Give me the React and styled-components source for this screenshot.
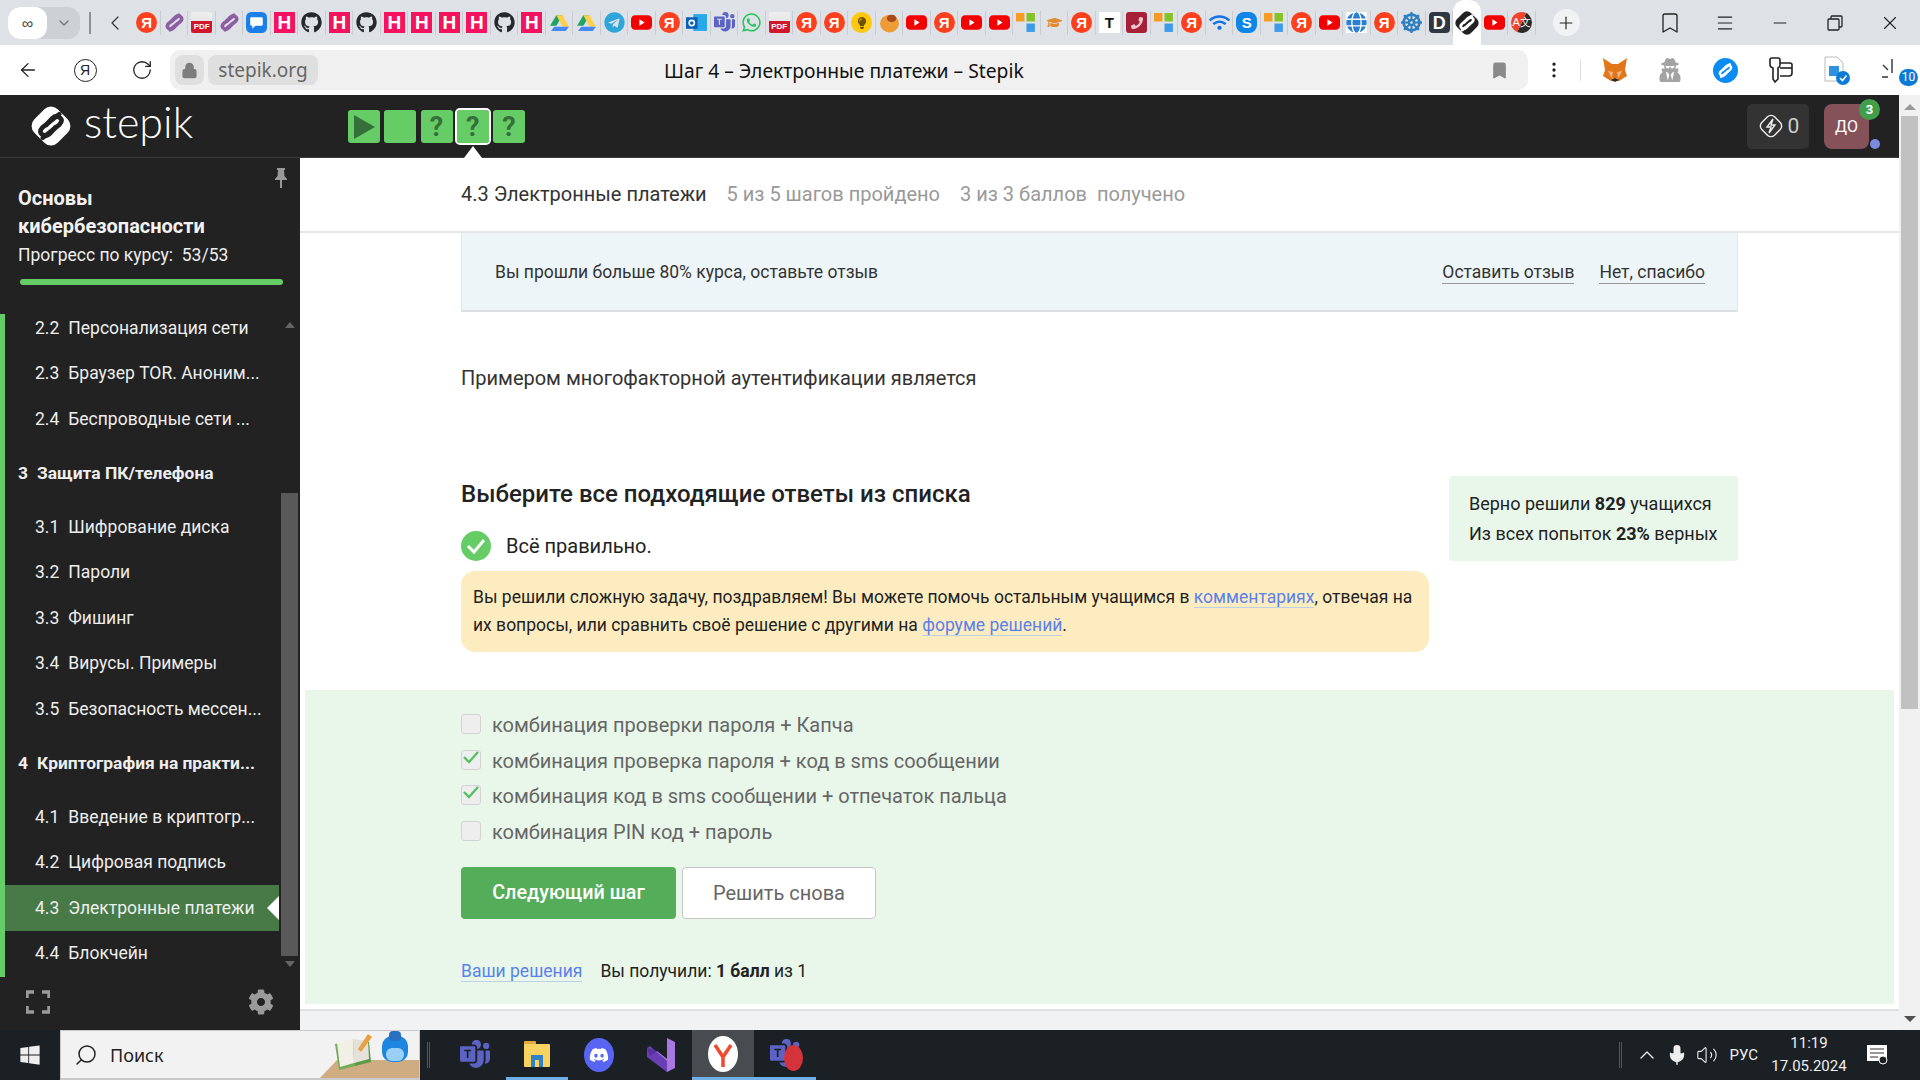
import styled, { createGlobalStyle } from "styled-components";
import { ArrowLeft, RotateCw, Lock, Bookmark, Plus, Menu, Minus, X, Search, ChevronUp, Volume2, Mic, ChevronDown, ChevronLeft, EllipsisVertical } from "lucide-react";
import {
  FaWindows,
  FaGithub,
  FaTelegram,
  FaWhatsapp,
  FaDiscord,
  FaWifi,
  FaCog,
  FaDharmachakra,
  FaGraduationCap,
  FaPhone,
  FaUserSecret,
  FaGlobe,
  FaLightbulb,
} from "react-icons/fa";
import { BsMicrosoftTeams } from "react-icons/bs";

const GlobalStyle = createGlobalStyle`
  html, body {
    margin: 0;
    padding: 0;
    overflow: hidden;
    background: #fff;
  }
  * { box-sizing: border-box; }
`;

const Page = styled.div`
  width: 1920px;
  height: 1080px;
  display: flex;
  flex-direction: column;
  overflow: hidden;
  font-family: Roboto, "Liberation Sans", sans-serif;
`;

/* browser chrome */
const TabBar = styled.div`
  height: 45px;
  flex: none;
  display: flex;
  align-items: center;
  background: #dee1e6;
`;

const TabGroup = styled.div`
  width: 72px;
  height: 32px;
  margin-left: 8px;
  display: flex;
  flex: none;
  border-radius: 12px;
  overflow: hidden;
  background: #cdd0d5;
`;

const GroupHome = styled.div`
  width: 39px;
  display: flex;
  align-items: center;
  justify-content: center;
  background: #fff;
  border-radius: 12px;
  font: 16px "Noto Sans", sans-serif;
  color: #444;
`;

const GroupArrow = styled.div`
  flex: 1;
  display: flex;
  align-items: center;
  justify-content: center;
  color: #777;
`;

const TabDivider = styled.div`
  width: 2px;
  height: 22px;
  flex: none;
  margin: 0 12px 0 9px;
  background: #8d9096;
`;

const BackTab = styled.div`
  width: 24px;
  flex: none;
  display: flex;
  justify-content: center;
  color: #333;
  margin-right: 6px;
`;

const Slots = styled.div`
  display: flex;
  height: 45px;
  flex: none;
`;

const Slot = styled.div`
  width: 27.5px;
  height: 45px;
  flex: none;
  position: relative;
  display: flex;
  align-items: center;
  justify-content: center;
  background: ${(p) => (p.$active ? "#fff" : "transparent")};
  border-radius: ${(p) => (p.$active ? "12px 12px 0 0" : "0")};

  &::after {
    content: "";
    display: ${(p) => (p.$active ? "none" : "block")};
    position: absolute;
    right: 0;
    top: 11px;
    height: 24px;
    width: 1px;
    background: #c9ccd1;
  }
`;

const Fav = styled.div`
  width: 21px;
  height: 21px;
  display: flex;
  align-items: center;
  justify-content: center;
  font-family: "Liberation Sans", sans-serif;
  font-weight: 700;
  color: #fff;
  overflow: hidden;
  line-height: 1;
`;

const YaFav = styled(Fav)`
  background: #fc3f1d;
  border-radius: 50%;
  font-size: 15px;
`;

const HFav = styled(Fav)`
  background: #f5135f;
  font-size: 19px;
`;

const DarkFav = styled(Fav)`
  background: #2f3743;
  border-radius: 4px;
  font-size: 18px;
`;

const BlueFav = styled(Fav)`
  background: #0f85e8;
  border-radius: 8px;
  font-size: 15px;
`;

const TFav = styled(Fav)`
  background: #fff;
  color: #111;
  font-size: 15px;
`;

const PdfFav = styled(Fav)`
  flex-direction: column;
  justify-content: flex-end;
  background: linear-gradient(#eee, #ddd);
  border-radius: 2px;

  span {
    width: 100%;
    height: 12px;
    background: #d0172c;
    font-size: 8px;
    line-height: 12px;
    text-align: center;
  }
`;

const TranslateFav = styled(Fav)`
  background: linear-gradient(115deg, #f0452a 52%, #2a2a2a 52%);
  border-radius: 50%;
  font-size: 11px;
  font-weight: 400;
`;

const GlyphFav = styled(Fav)`
  color: ${(p) => p.$color};
  background: ${(p) => p.$bg || "transparent"};
  border-radius: ${(p) => p.$radius || "0"};
  font-size: ${(p) => p.$size || "21px"};
`;

const NewTab = styled.div`
  width: 27px;
  height: 27px;
  margin-left: 17px;
  flex: none;
  border-radius: 50%;
  background: #f1f2f4;
  display: flex;
  align-items: center;
  justify-content: center;
  color: #222;
`;

const WindowControls = styled.div`
  margin-left: auto;
  margin-right: 3px;
  display: flex;
  align-items: center;
  color: #222;
`;

const WinBtn = styled.div`
  width: 55px;
  display: flex;
  justify-content: center;
`;

const AddressRow = styled.div`
  height: 50px;
  flex: none;
  display: flex;
  align-items: center;
  background: #fff;
  border-radius: 12px 12px 0 0;
  color: #222;
`;

const NavBtn = styled.div`
  width: 57px;
  display: flex;
  justify-content: center;
`;

const NavGroup = styled.div`
  display: flex;
  width: 170px;
  flex: none;
`;

const YaRing = styled.div`
  width: 23px;
  height: 23px;
  border: 1.5px solid #222;
  border-radius: 50%;
  display: flex;
  align-items: center;
  justify-content: center;
  font: 14px "Liberation Sans", sans-serif;
`;

const AddressBox = styled.div`
  width: 1358px;
  height: 40px;
  flex: none;
  background: #f0f0f0;
  border-radius: 10px;
  display: flex;
  align-items: center;
  padding: 0 19px 0 5px;
  gap: 4px;
`;

const LockBox = styled.div`
  width: 29px;
  height: 30px;
  border-radius: 8px;
  background: #dfdfdf;
  color: #7d7d7d;
  display: flex;
  align-items: center;
  justify-content: center;
`;

const HostBox = styled.div`
  width: 110px;
  height: 30px;
  border-radius: 8px;
  background: #dfdfdf;
  color: #666;
  font: 19px/30px "Noto Sans", sans-serif;
  text-align: center;
`;

const PageTitle = styled.div`
  flex: 1;
  padding-left: 342px;
  font: 19.3px "Noto Sans", sans-serif;
  color: #111;
  white-space: nowrap;
`;

const AddressMark = styled.div`
  color: #8a8a8a;
  display: flex;
`;

const Extensions = styled.div`
  display: flex;
  align-items: center;
  flex: none;
  margin-left: 16px;
`;

const ExtDivider = styled.div`
  width: 1px;
  height: 22px;
  background: #ddd;
  margin-left: 16px;
  margin-right: 6px;
`;

const Ext = styled.div`
  width: 55.5px;
  height: 30px;
  position: relative;
  display: flex;
  align-items: center;
  justify-content: center;
`;

const ExtBadge = styled.span`
  position: absolute;
  right: 2px;
  bottom: -1px;
  min-width: 19px;
  height: 17px;
  padding: 0 2px;
  border-radius: 9px;
  background: #0b7bd6;
  color: #fff;
  font: 12px/17px Roboto, sans-serif;
  text-align: center;
`;

/* stepik */
const Viewport = styled.div`
  flex: 1;
  min-height: 0;
  display: flex;
`;

const AppColumn = styled.div`
  flex: 1;
  min-width: 0;
  display: flex;
  flex-direction: column;
`;

const Header = styled.header`
  height: 63px;
  flex: none;
  display: flex;
  align-items: center;
  background: #222;
  border-bottom: 1px solid #3a3a3a;
  padding: 0 30px 0 31px;
`;

const Brand = styled.div`
  width: 317px;
  display: flex;
  align-items: center;
  gap: 13px;
  color: #fff;
  font: 300 43px/40px Lato, Roboto, sans-serif;
`;

const BrandName = styled.span`
  margin-top: -8px;
`;

const Steps = styled.div`
  display: flex;
  gap: 4.25px;
  margin-top: 1px;
`;

const StepBtn = styled.div`
  width: 32px;
  height: 33px;
  position: relative;
  display: flex;
  align-items: center;
  justify-content: center;
  background: #66cc66;
  border-radius: 3px;
  color: #35703a;
  font: 700 27px Roboto, sans-serif;
  outline: ${(p) => (p.$current ? "2px solid #fff" : "none")};

  &::after {
    content: "";
    display: ${(p) => (p.$current ? "block" : "none")};
    position: absolute;
    left: 7px;
    top: 36px;
    border: 9px solid transparent;
    border-top: 0;
    border-bottom: 12px solid #fff;
  }
`;

const HeaderRight = styled.div`
  margin-left: auto;
  display: flex;
  align-items: center;
  gap: 15px;
`;

const Score = styled.div`
  width: 62px;
  height: 45px;
  border-radius: 5px;
  background: #333;
  color: #ccc;
  font: 21px Roboto, sans-serif;
  display: flex;
  align-items: center;
  justify-content: center;
  gap: 3px;
`;

const Avatar = styled.div`
  width: 45px;
  height: 45px;
  position: relative;
  border-radius: 8px;
  background: #86525a;
  color: #fff;
  font: 16px/45px Roboto, sans-serif;
  text-align: center;
`;

const AvatarBadge = styled.span`
  position: absolute;
  right: -11px;
  top: -5px;
  width: 21px;
  height: 21px;
  border-radius: 50%;
  background: #3f9f4b;
  font: 700 13px/21px Roboto, sans-serif;
`;

const AvatarDot = styled.span`
  position: absolute;
  right: -11px;
  bottom: 0;
  width: 10px;
  height: 10px;
  border-radius: 50%;
  background: #7b8be0;
`;

const Workspace = styled.div`
  flex: 1;
  min-height: 0;
  display: flex;
`;

const Sidebar = styled.aside`
  width: 300px;
  flex: none;
  display: flex;
  flex-direction: column;
  background: #222;
  color: #eee;
  position: relative;
`;

const PinIcon = styled.div`
  position: absolute;
  top: 10px;
  right: 12px;
  color: #999;
`;

const CourseHead = styled.div`
  height: 156px;
  flex: none;
  padding: 26px 17px 0 18px;
`;

const CourseTitle = styled.div`
  font: 700 20px/28px Roboto, sans-serif;
  color: #f2f2f2;
`;

const CourseProgress = styled.div`
  font: 17.5px/24px Roboto, sans-serif;
  margin-top: 3px;
  color: #eee;
  white-space: pre;
`;

const ProgressBar = styled.div`
  height: 6px;
  width: 263px;
  margin: 12px 0 0 2px;
  border-radius: 3px;
  background: #66cc66;
`;

const TocArea = styled.div`
  flex: 1;
  min-height: 0;
  display: flex;
`;

const TocList = styled.div`
  width: 279px;
  flex: none;
  overflow: hidden;
  border-left: 5px solid #66cc66;
`;

const TocInner = styled.div`
  margin-top: -9px;
`;

const TocItem = styled.div`
  height: 45.5px;
  position: relative;
  display: flex;
  align-items: center;
  padding-left: 30px;
  gap: 9px;
  font: 17.5px Roboto, sans-serif;
  white-space: nowrap;
  background: ${(p) => (p.$active ? "#477a46" : "transparent")};

  &::after {
    content: "";
    display: ${(p) => (p.$active ? "block" : "none")};
    position: absolute;
    right: 0;
    top: 11px;
    border: 12px solid transparent;
    border-left: 0;
    border-right: 12px solid #fff;
  }
`;

const TocSection = styled.div`
  height: 62.5px;
  display: flex;
  align-items: center;
  padding-left: 13px;
  gap: 9px;
  font: 700 17.4px Roboto, sans-serif;
  white-space: nowrap;
`;

const TocScroll = styled.div`
  width: 17px;
  margin-left: 2px;
  display: flex;
  flex-direction: column;
  align-items: center;
`;

const TocArrow = styled.div`
  margin-top: ${(p) => (p.$up ? "8px" : "5px")};
  border: 5px solid transparent;
  ${(p) => (p.$up ? "border-top: 0; border-bottom: 6px solid #666;" : "border-bottom: 0; border-top: 6px solid #666;")}
`;

const TocThumb = styled.div`
  width: 17px;
  height: 463px;
  margin-top: 165px;
  background: #595959;
`;

const SideFoot = styled.div`
  height: 53px;
  flex: none;
  display: flex;
  align-items: center;
  justify-content: space-between;
  padding: 0 26px 4px 26px;
  color: #9a9a9a;
`;

const Main = styled.main`
  flex: 1;
  min-width: 0;
  display: flex;
  flex-direction: column;
  background: #fff;
  overflow: hidden;
`;

const LessonBar = styled.div`
  height: 75px;
  flex: none;
  display: flex;
  align-items: center;
  padding: 0 0 2px 161px;
  gap: 20px;
  border-bottom: 2px solid #e5e6e8;
  font: 20px Roboto, sans-serif;
  color: #333;
`;

const Muted = styled.span`
  color: #999;
  white-space: pre;
`;

const Banner = styled.div`
  height: 79px;
  margin: 0 161px;
  padding: 0 33px;
  flex: none;
  display: flex;
  align-items: center;
  justify-content: space-between;
  background: #eef5f8;
  border: 1px solid #e3e8eb;
  border-top: 0;
  border-bottom: 2px solid #dde0e3;
  font: 17.5px Roboto, sans-serif;
  color: #333;
`;

const BannerLinks = styled.div`
  display: flex;
  gap: 25px;
  margin: 2px -1px 0 0;
`;

const BannerLink = styled.span`
  border-bottom: 1px solid #999;
  line-height: 21px;
`;

const Question = styled.p`
  margin: 54px 161px 0;
  font: 20px/24px Roboto, sans-serif;
  color: #333;
`;

const TaskGrid = styled.div`
  margin: 87px 161px 0;
  display: grid;
  grid-template-columns: 968px 289px;
  column-gap: 20px;
  align-items: start;
`;

const TaskHead = styled.div`
  display: flex;
  flex-direction: column;
`;

const Heading = styled.h2`
  margin: 0;
  font: 500 24px/34px Roboto, sans-serif;
  color: #222;
`;

const Verdict = styled.div`
  margin-top: 20px;
  height: 30px;
  display: flex;
  align-items: center;
  gap: 15px;
  font: 20px Roboto, sans-serif;
  color: #222;
`;

const Notice = styled.div`
  margin-top: 10px;
  height: 81px;
  padding: 12px 12px;
  background: #fdecc0;
  border-radius: 14px;
  font: 17.5px/28px Roboto, sans-serif;
  color: #222;
  white-space: nowrap;
`;

const TextLink = styled.a`
  color: #5a81ea;
  border-bottom: 1px solid #bcd0e8;
`;

const StatBox = styled.div`
  height: 85px;
  margin-top: -1px;
  padding: 13px 20px;
  background: #e8f7ea;
  border-radius: 4px;
  font: 18px/30px Roboto, sans-serif;
  color: #222;
  white-space: nowrap;

  b {
    font-weight: 700;
  }
`;

const AnswerPanel = styled.section`
  height: 314px;
  margin: 38px 5px 0;
  padding: 17px 0 0 156px;
  background: #e8f7ea;
  flex: none;
`;

const Option = styled.div`
  height: 35.8px;
  display: flex;
  align-items: center;
  gap: 11px;
  font: 20px Roboto, sans-serif;
  color: #666;
`;

const Tick = styled.div`
  width: 20px;
  height: 20px;
  margin-top: -2px;
  background: #eee;
  border: 1px solid #d3d3d3;
  border-radius: 3px;
  display: flex;
  align-items: flex-start;
  justify-content: center;
  color: #55c15f;
`;

const Actions = styled.div`
  display: flex;
  gap: 6px;
  margin-top: 17px;
`;

const PrimaryBtn = styled.div`
  width: 215px;
  height: 52px;
  border-radius: 4px;
  background: #54ad58;
  color: #fff;
  font: 500 19.8px/52px Roboto, sans-serif;
  text-align: center;
`;

const GhostBtn = styled.div`
  width: 194px;
  height: 52px;
  border-radius: 4px;
  background: #fff;
  border: 1px solid #c6c6c6;
  color: #666;
  font: 20px/50px Roboto, sans-serif;
  text-align: center;
`;

const ResultLine = styled.div`
  margin-top: 40px;
  display: flex;
  gap: 18px;
  font: 17.5px/24px Roboto, sans-serif;
  color: #222;
`;

const MainTail = styled.div`
  flex: 1;
  margin-top: 5px;
  background: #f1f2f4;
  border-top: 2px solid #dfe0e2;
`;

const PageScroll = styled.div`
  width: 21px;
  flex: none;
  display: flex;
  flex-direction: column;
  align-items: center;
  background: #f1f1f1;
  position: relative;
`;

const ScrollArrow = styled.div`
  margin-top: ${(p) => (p.$up ? "9px" : "auto")};
  margin-bottom: ${(p) => (p.$up ? "0" : "8px")};
  border: 6px solid transparent;
  ${(p) => (p.$up ? "border-top: 0; border-bottom: 6px solid #999;" : "border-bottom: 0; border-top: 6px solid #505050;")}
`;

const ScrollThumb = styled.div`
  width: 17px;
  height: 593px;
  margin-top: 6px;
  background: #c1c1c1;
`;

/* taskbar */
const Taskbar = styled.footer`
  height: 50px;
  flex: none;
  display: flex;
  align-items: center;
  background: #1b2025;
  color: #eee;
`;

const StartBtn = styled.div`
  width: 60px;
  display: flex;
  justify-content: center;
`;

const SearchBox = styled.div`
  width: 360px;
  height: 50px;
  display: flex;
  align-items: center;
  gap: 12px;
  padding-left: 13px;
  background: #f2f2f2;
  border: 1px solid #c9c9c9;
  border-bottom-width: 2px;
  color: #222;
  font: 18px "Noto Sans", sans-serif;
  position: relative;
`;

const SearchArt = styled.div`
  position: absolute;
  right: 0;
  bottom: 0;
  display: flex;
`;

const TaskSep = styled.div`
  width: 3px;
  height: 26px;
  margin: 0 14px 0 7px;
  border-left: 1px solid #555;
  border-right: 1px solid #555;
`;

const TrayDivider = styled(TaskSep)`
  margin: 0 10px 0 0;
`;

const TaskApps = styled.div`
  display: flex;
`;

const TaskApp = styled.div`
  width: 62px;
  height: 50px;
  display: flex;
  align-items: center;
  justify-content: center;
  position: relative;
  background: ${(p) => (p.$active ? "#484c50" : "transparent")};
  border-bottom: ${(p) => (p.$running ? "3px solid #6fb1e6" : "0")};
`;

const AppCircle = styled.div`
  width: 30px;
  height: 34px;
  border-radius: 50%;
  background: ${(p) => p.$bg};
  display: flex;
  align-items: center;
  justify-content: center;
  color: #fff;
`;

const RedDot = styled.span`
  position: absolute;
  left: 30px;
  top: 15px;
  width: 19px;
  height: 26px;
  border-radius: 50%;
  background: #d5333b;
`;

const Tray = styled.div`
  margin-left: auto;
  display: flex;
  align-items: center;
`;

const TrayIcon = styled.div`
  width: 30px;
  display: flex;
  justify-content: center;
  color: #eee;
`;

const TrayLang = styled.div`
  font: 15px Roboto, sans-serif;
  margin: 0 10px 0 8px;
`;

const Clock = styled.div`
  width: 82px;
  text-align: center;
  font: 15px/23px Roboto, sans-serif;
`;

const NotifyWrap = styled.div`
  margin: 0 31px 0 17px;
  display: flex;
`;

const YA = { kind: "ya" };
const H = { kind: "h" };
const GH = { kind: "gh" };
const YT = { kind: "yt" };
const SQ = { kind: "sq" };
const tabs = [
  YA, { kind: "sp" }, { kind: "pdf" }, { kind: "sp" }, { kind: "chat" }, H, GH, H, GH, H, H, H, H, GH, H,
  { kind: "drive" }, { kind: "drive" }, { kind: "tg" }, YT, YA, { kind: "ol" }, { kind: "teams" }, { kind: "wa" },
  { kind: "pdf" }, YA, YA, { kind: "bulb" }, { kind: "bread" }, YT, YA, YT, YT, SQ, { kind: "moodle" }, YA,
  { kind: "t" }, { kind: "phone" }, SQ, YA, { kind: "wifi" }, { kind: "s" }, SQ, YA, YT, { kind: "globe" }, YA,
  { kind: "wheel" }, { kind: "d" }, { kind: "stepik", active: true }, YT, { kind: "tr" },
];

const hookA = "M27 10 L13 21 Q9 25 13 27.5 Q16 29.5 19 26.5 L24 21";
const hookB = "M13 30 L27 19 Q31 15 27 12.5 Q24 10.5 21 13.5 L16 19";

function StepikMark({ size, bg, fg }) {
  return (
    <svg width={size} height={size} viewBox="3 3 34 34">
      <rect x="6" y="6" width="28" height="28" rx="8" transform="rotate(45 20 20)" fill={bg} />
      <path d={hookA} fill="none" stroke={fg} strokeWidth="4" strokeLinecap="round" />
      <path d={hookB} fill="none" stroke={fg} strokeWidth="4" strokeLinecap="round" />
    </svg>
  );
}

function Favicon({ kind }) {
  switch (kind) {
    case "ya":
      return <YaFav>Я</YaFav>;
    case "h":
      return <HFav>H</HFav>;
    case "gh":
      return <GlyphFav $color="#24292e"><FaGithub /></GlyphFav>;
    case "d":
      return <DarkFav>D</DarkFav>;
    case "s":
      return <BlueFav>S</BlueFav>;
    case "t":
      return <TFav>T</TFav>;
    case "pdf":
      return <PdfFav><span>PDF</span></PdfFav>;
    case "tr":
      return <TranslateFav>A文</TranslateFav>;
    case "tg":
      return <GlyphFav $color="#2ea6da"><FaTelegram /></GlyphFav>;
    case "wa":
      return <GlyphFav $color="#25c45a"><FaWhatsapp /></GlyphFav>;
    case "teams":
      return <GlyphFav $color="#5c63c4"><BsMicrosoftTeams /></GlyphFav>;
    case "wifi":
      return <GlyphFav $color="#1473e6"><FaWifi /></GlyphFav>;
    case "wheel":
      return <GlyphFav $color="#2f7fc1"><FaDharmachakra /></GlyphFav>;
    case "globe":
      return <GlyphFav $color="#2b7fd0" $bg="#fff"><FaGlobe /></GlyphFav>;
    case "phone":
      return <GlyphFav $color="#f2c6cc" $bg="#a5213a" $size="12px" $radius="3px"><FaPhone /></GlyphFav>;
    case "moodle":
      return <GlyphFav $color="#e28a2f" $size="15px"><FaGraduationCap /></GlyphFav>;
    case "bulb":
      return <GlyphFav $color="#6b5200" $bg="#ffc80a" $size="12px" $radius="50%"><FaLightbulb /></GlyphFav>;
    case "sp":
      return (
        <svg width="21" height="21" viewBox="7 7 26 26">
          <path d={hookA} fill="none" stroke="#8e5ea2" strokeWidth="4.5" />
          <path d={hookB} fill="none" stroke="#8e5ea2" strokeWidth="4.5" />
        </svg>
      );
    case "chat":
      return (
        <svg width="21" height="21" viewBox="0 0 20 20">
          <rect width="20" height="20" rx="5" fill="#1a7fe8" />
          <path d="M5 5 H15 Q16 5 16 6 V12 Q16 13 15 13 H9 L6 16 V13 H5 Q4 13 4 12 V6 Q4 5 5 5 Z" fill="#fff" />
        </svg>
      );
    case "drive":
      return (
        <svg width="21" height="21" viewBox="0 0 20 20">
          <polygon points="7,3 13,3 7,13 1,13" fill="#1fa463" />
          <polygon points="7,3 13,3 19,14 13,14" fill="#ffd04b" />
          <polygon points="5,14 19,14 16,18 2,18" fill="#4688f4" />
        </svg>
      );
    case "yt":
      return (
        <svg width="21" height="21" viewBox="0 0 20 20">
          <rect y="3" width="20" height="14" rx="4" fill="#f40000" />
          <polygon points="8,7 8,13 13,10" fill="#fff" />
        </svg>
      );
    case "ol":
      return (
        <svg width="21" height="21" viewBox="0 0 20 20">
          <rect x="7" y="2" width="13" height="16" fill="#28a8ea" />
          <rect y="5" width="11" height="11" fill="#0a5fb4" />
          <circle cx="5.5" cy="10.5" r="2.5" fill="none" stroke="#fff" strokeWidth="1.5" />
        </svg>
      );
    case "bread":
      return (
        <svg width="21" height="21" viewBox="0 0 20 20">
          <ellipse cx="10" cy="11" rx="9" ry="8.5" fill="#ee9a35" />
          <ellipse cx="12" cy="6" rx="4.5" ry="3.5" fill="#a8481d" />
        </svg>
      );
    case "sq":
      return (
        <svg width="21" height="21" viewBox="0 0 20 20">
          <rect y="1" width="8" height="8" fill="#f59a23" />
          <rect x="10" y="1" width="8" height="8" fill="#84c225" />
          <rect x="10" y="11" width="8" height="8" fill="#3d9be9" />
        </svg>
      );
    case "stepik":
      return <StepikMark size={24} bg="#222" fg="#fff" />;
    default:
      return null;
  }
}

const Fox = () => (
  <svg width="26" height="26" viewBox="0 0 26 26">
    <polygon points="1,1 10,7 16,7 25,1 23,13 25,19 17,24 9,24 1,19 3,13" fill="#e2761b" />
    <polygon points="6,14 11,15 10,20 13,23 16,20 15,15 20,14 17,20 13,24 9,20" fill="#f6b183" />
    <polygon points="9,23 13,21 17,23 13,25" fill="#2c2c2c" />
  </svg>
);

const Shazam = () => (
  <svg width="25" height="25" viewBox="0 0 40 40">
    <circle cx="20" cy="20" r="20" fill="#0a8cf2" />
    <path d={hookA} fill="none" stroke="#fff" strokeWidth="4" strokeLinecap="round" />
    <path d={hookB} fill="none" stroke="#fff" strokeWidth="4" strokeLinecap="round" />
  </svg>
);

const KeyCards = () => (
  <svg width="24" height="26" viewBox="0 0 24 26" fill="none" stroke="#222" strokeWidth="1.6">
    <path d="M1 3 Q1 1 3 1 H9 Q11 1 11 3 V8 Q11 10 9 11 V22 L6 25 L4 22 V11 Q1 10 1 8 Z" />
    <path d="M11 6 H21 Q23 6 23 8 V16 Q23 19 20 19 H11" />
    <path d="M11 11 H23" />
  </svg>
);

const DocCheck = () => (
  <svg width="28" height="30" viewBox="0 0 28 30">
    <path d="M2 2 H14 L20 8 V26 H2 Z" fill="#fff" stroke="#bbb" />
    <rect x="6" y="11" width="10" height="10" fill="#2f8fe0" />
    <circle cx="20" cy="23" r="7" fill="#0b7bd6" />
    <path d="M17 23 L19.5 25.5 L23.5 20.5" fill="none" stroke="#fff" strokeWidth="1.6" />
  </svg>
);

const Sparkle = () => (
  <svg width="24" height="26" viewBox="0 0 24 26" stroke="#333" strokeWidth="1.4">
    <path d="M12 2 V16 M2 20 H8 M3 8 L8 13" />
  </svg>
);

const Pin = () => (
  <svg width="14" height="20" viewBox="0 0 14 20" fill="currentColor">
    <path d="M3 0 H11 V2 H10 L10.5 8 L13 11 V12 H8 V20 H6 V12 H1 V11 L3.5 8 L4 2 H3 Z" />
  </svg>
);

const Corners = () => (
  <svg width="24" height="24" viewBox="0 0 24 24" fill="none" stroke="currentColor" strokeWidth="3.5">
    <path d="M1 8 V2 H8 M16 2 H23 V8 M23 16 V22 H16 M8 22 H1 V16" />
  </svg>
);

const CheckBadge = () => (
  <svg width="30" height="30" viewBox="0 0 30 30">
    <circle cx="15" cy="15" r="15" fill="#66cc66" />
    <path d="M7 15 L13 21 L23 9" fill="none" stroke="#fff" strokeWidth="3" />
  </svg>
);

const SmallTick = () => (
  <svg width="18" height="14" viewBox="0 0 18 14" fill="none" stroke="currentColor" strokeWidth="2.4">
    <path d="M2 6 L7 11 L16 1" />
  </svg>
);

const ScoreMark = () => (
  <svg width="28" height="28" viewBox="0 0 28 28" fill="none" stroke="#eee" strokeWidth="1.4">
    <rect x="5" y="5" width="18" height="18" rx="5" transform="rotate(45 14 14)" />
    <path d="M16 7 L10 15 H14 L12 21 L18 13 H14 Z" />
  </svg>
);

const RestoreIcon = () => (
  <svg width="16" height="16" viewBox="0 0 16 16" fill="none" stroke="currentColor" strokeWidth="1.3">
    <rect x="1" y="4" width="11" height="11" rx="1" />
    <path d="M4 4 V2 Q4 1 5 1 H14 Q15 1 15 2 V11 Q15 12 14 12 H12" />
  </svg>
);

const NotifyIcon = () => (
  <svg width="22" height="20" viewBox="0 0 22 20">
    <rect width="20" height="16" fill="#fff" />
    <path d="M3 4 H17 M3 8 H17 M3 12 H11" stroke="#333" strokeWidth="1.2" />
    <circle cx="16" cy="15" r="4" fill="#1b2025" stroke="#fff" />
  </svg>
);

const FolderIcon = () => (
  <svg width="30" height="30" viewBox="0 0 30 30">
    <rect x="2" y="2" width="12" height="6" rx="1" fill="#e8a73a" />
    <rect x="2" y="5" width="26" height="23" rx="1" fill="#f9d362" />
    <rect x="9" y="16" width="12" height="12" fill="#2f82c5" />
    <rect x="13" y="21" width="4" height="7" fill="#f9d362" />
  </svg>
);

const VsIcon = () => (
  <svg width="30" height="36" viewBox="0 0 30 36">
    <polygon points="21,1 29,5 29,31 21,35 4,19 11,14 21,22" fill="#a678e0" />
    <polygon points="1,11 4,9 21,24 21,35 1,20" fill="#6a3fb5" />
    <polygon points="1,11 11,14 4,19" fill="#5a2fa5" />
  </svg>
);

const YandexApp = () => (
  <svg width="30" height="36" viewBox="0 0 30 36">
    <ellipse cx="15" cy="18" rx="15" ry="18" fill="#fff" />
    <path d="M7 9 L15 21 L23 9 M15 21 V31" fill="none" stroke="#f04a30" strokeWidth="3.5" />
  </svg>
);

const SearchDecor = () => (
  <svg width="100" height="50" viewBox="0 0 100 50">
    <polygon points="1,50 18,32 100,32 100,50" fill="#d0ac82" />
    <polygon points="16,16 34,12 36,38 20,42" fill="#6fae56" />
    <polygon points="34,12 50,14 52,34 36,38" fill="#5a9a4a" />
    <polygon points="18,15 34,11 35,35 21,39" fill="#f1efe6" />
    <polygon points="34,11 49,13 50,31 35,35" fill="#e4e2d8" />
    <polygon points="39,21 49,6 53,9 42,24" fill="#e8a040" />
    <rect x="63" y="8" width="26" height="26" rx="10" fill="#1c86e0" />
    <rect x="70" y="3" width="12" height="10" rx="4" fill="#2b6fc0" />
    <rect x="67" y="20" width="18" height="13" rx="6" fill="#9ad0f5" />
  </svg>
);

function App() {
  return (
    <Page>
      <GlobalStyle />
      <TabBar>
        <TabGroup>
          <GroupHome>∞</GroupHome>
          <GroupArrow><ChevronDown size={16} /></GroupArrow>
        </TabGroup>
        <TabDivider />
        <BackTab><ChevronLeft size={26} strokeWidth={1.2} /></BackTab>
        <Slots>
          {tabs.map((tab, i) => (
            <Slot key={i} $active={tab.active}>
              <Favicon kind={tab.kind} />
            </Slot>
          ))}
        </Slots>
        <NewTab><Plus size={20} strokeWidth={1.4} /></NewTab>
        <WindowControls>
          <WinBtn><Bookmark size={24} strokeWidth={1.3} /></WinBtn>
          <WinBtn><Menu size={20} strokeWidth={1.4} /></WinBtn>
          <WinBtn><Minus size={20} strokeWidth={1.4} /></WinBtn>
          <WinBtn><RestoreIcon /></WinBtn>
          <WinBtn><X size={22} strokeWidth={1.2} /></WinBtn>
        </WindowControls>
      </TabBar>

      <AddressRow>
        <NavGroup>
          <NavBtn><ArrowLeft size={22} strokeWidth={1.4} /></NavBtn>
          <NavBtn><YaRing>Я</YaRing></NavBtn>
          <NavBtn><RotateCw size={22} strokeWidth={1.4} /></NavBtn>
        </NavGroup>
        <AddressBox>
          <LockBox><Lock size={17} fill="currentColor" /></LockBox>
          <HostBox>stepik.org</HostBox>
          <PageTitle>Шаг 4 – Электронные платежи – Stepik</PageTitle>
          <AddressMark><Bookmark size={19} fill="currentColor" /></AddressMark>
        </AddressBox>
        <Extensions>
          <EllipsisVertical size={20} />
          <ExtDivider />
          <Ext><Fox /></Ext>
          <Ext><FaUserSecret size={24} color="#a3a3a3" /></Ext>
          <Ext><Shazam /></Ext>
          <Ext><KeyCards /></Ext>
          <Ext><DocCheck /></Ext>
          <Ext><Sparkle /><ExtBadge>10</ExtBadge></Ext>
        </Extensions>
      </AddressRow>

      <Viewport>
        <AppColumn>
          <Header>
            <Brand>
              <StepikMark size={40} bg="#fff" fg="#222" />
              <BrandName>stepik</BrandName>
            </Brand>
            <Steps>
              <StepBtn>
                <svg width="24" height="26" viewBox="0 0 24 26"><polygon points="2,1 23,13 2,25" fill="#35703a" /></svg>
              </StepBtn>
              <StepBtn />
              <StepBtn>?</StepBtn>
              <StepBtn $current>?</StepBtn>
              <StepBtn>?</StepBtn>
            </Steps>
            <HeaderRight>
              <Score><ScoreMark />0</Score>
              <Avatar>
                ДО
                <AvatarBadge>3</AvatarBadge>
                <AvatarDot />
              </Avatar>
            </HeaderRight>
          </Header>

          <Workspace>
            <Sidebar>
              <PinIcon><Pin /></PinIcon>
              <CourseHead>
                <CourseTitle>Основы<br />кибербезопасности</CourseTitle>
                <CourseProgress>Прогресс по курсу:  53/53</CourseProgress>
                <ProgressBar />
              </CourseHead>
              <TocArea>
                <TocList>
                  <TocInner>
                    <TocItem><span>2.2</span><span>Персонализация сети</span></TocItem>
                    <TocItem><span>2.3</span><span>Браузер TOR. Аноним...</span></TocItem>
                    <TocItem><span>2.4</span><span>Беспроводные сети ...</span></TocItem>
                    <TocSection><span>3</span><span>Защита ПК/телефона</span></TocSection>
                    <TocItem><span>3.1</span><span>Шифрование диска</span></TocItem>
                    <TocItem><span>3.2</span><span>Пароли</span></TocItem>
                    <TocItem><span>3.3</span><span>Фишинг</span></TocItem>
                    <TocItem><span>3.4</span><span>Вирусы. Примеры</span></TocItem>
                    <TocItem><span>3.5</span><span>Безопасность мессен...</span></TocItem>
                    <TocSection><span>4</span><span>Криптография на практи...</span></TocSection>
                    <TocItem><span>4.1</span><span>Введение в криптогр...</span></TocItem>
                    <TocItem><span>4.2</span><span>Цифровая подпись</span></TocItem>
                    <TocItem $active><span>4.3</span><span>Электронные платежи</span></TocItem>
                    <TocItem><span>4.4</span><span>Блокчейн</span></TocItem>
                  </TocInner>
                </TocList>
                <TocScroll>
                  <TocArrow $up />
                  <TocThumb />
                  <TocArrow />
                </TocScroll>
              </TocArea>
              <SideFoot>
                <Corners />
                <FaCog size={26} />
              </SideFoot>
            </Sidebar>

            <Main>
              <LessonBar>
                <span>4.3 Электронные платежи</span>
                <Muted>5 из 5 шагов пройдено</Muted>
                <Muted>3 из 3 баллов  получено</Muted>
              </LessonBar>
              <Banner>
                <span>Вы прошли больше 80% курса, оставьте отзыв</span>
                <BannerLinks>
                  <BannerLink>Оставить отзыв</BannerLink>
                  <BannerLink>Нет, спасибо</BannerLink>
                </BannerLinks>
              </Banner>
              <Question>Примером многофакторной аутентификации является</Question>
              <TaskGrid>
                <TaskHead>
                  <Heading>Выберите все подходящие ответы из списка</Heading>
                  <Verdict><CheckBadge />Всё правильно.</Verdict>
                  <Notice>
                    Вы решили сложную задачу, поздравляем! Вы можете помочь остальным учащимся в{" "}
                    <TextLink>комментариях</TextLink>, отвечая на
                    <br />
                    их вопросы, или сравнить своё решение с другими на <TextLink>форуме решений</TextLink>.
                  </Notice>
                </TaskHead>
                <StatBox>
                  Верно решили <b>829</b> учащихся
                  <br />
                  Из всех попыток <b>23%</b> верных
                </StatBox>
              </TaskGrid>
              <AnswerPanel>
                <Option><Tick />комбинация проверки пароля + Капча</Option>
                <Option><Tick><SmallTick /></Tick>комбинация проверка пароля + код в sms сообщении</Option>
                <Option><Tick><SmallTick /></Tick>комбинация код в sms сообщении + отпечаток пальца</Option>
                <Option><Tick />комбинация PIN код + пароль</Option>
                <Actions>
                  <PrimaryBtn>Следующий шаг</PrimaryBtn>
                  <GhostBtn>Решить снова</GhostBtn>
                </Actions>
                <ResultLine>
                  <span><TextLink>Ваши решения</TextLink></span>
                  <span>Вы получили: <b>1 балл</b> из 1</span>
                </ResultLine>
              </AnswerPanel>
              <MainTail />
            </Main>
          </Workspace>
        </AppColumn>
        <PageScroll>
          <ScrollArrow $up />
          <ScrollThumb />
          <ScrollArrow />
        </PageScroll>
      </Viewport>

      <Taskbar>
        <StartBtn><FaWindows size={22} /></StartBtn>
        <SearchBox>
          <Search size={24} strokeWidth={1.5} style={{ transform: "scaleX(-1)" }} />
          Поиск
          <SearchArt><SearchDecor /></SearchArt>
        </SearchBox>
        <TaskSep />
        <TaskApps>
          <TaskApp><BsMicrosoftTeams size={30} color="#5c63c4" /></TaskApp>
          <TaskApp $running><FolderIcon /></TaskApp>
          <TaskApp><AppCircle $bg="#5865f2"><FaDiscord size={20} /></AppCircle></TaskApp>
          <TaskApp><VsIcon /></TaskApp>
          <TaskApp $active $running><YandexApp /></TaskApp>
          <TaskApp $running><BsMicrosoftTeams size={30} color="#5c63c4" /><RedDot /></TaskApp>
        </TaskApps>
        <Tray>
          <TrayDivider />
          <TrayIcon><ChevronUp size={24} strokeWidth={1.4} /></TrayIcon>
          <TrayIcon><Mic size={22} strokeWidth={1.6} fill="currentColor" /></TrayIcon>
          <TrayIcon><Volume2 size={22} strokeWidth={1.2} /></TrayIcon>
          <TrayLang>РУС</TrayLang>
          <Clock>11:19<br />17.05.2024</Clock>
          <NotifyWrap><NotifyIcon /></NotifyWrap>
        </Tray>
      </Taskbar>
    </Page>
  );
}

export default App;
